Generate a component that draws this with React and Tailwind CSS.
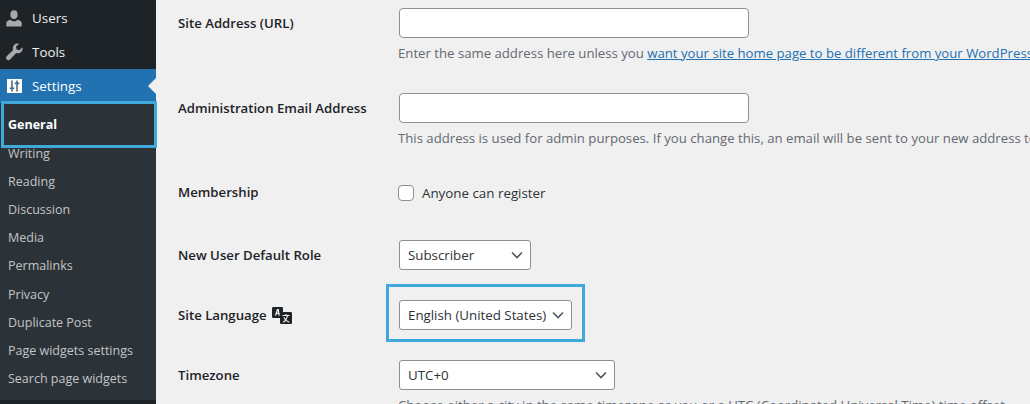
import React from 'react';

const FONT = "font-['Open_Sans','Noto_Sans',sans-serif]";

const SUB_ITEMS = [
  ['Writing', 'h-[28px]'],
  ['Reading', 'h-[28px]'],
  ['Discussion', 'h-[28px]'],
  ['Media', 'h-[28px]'],
  ['Permalinks', 'h-[29px]'],
  ['Privacy', 'h-[28px]'],
  ['Duplicate Post', 'h-[28px]'],
  ['Page widgets settings', 'h-[28px]'],
  ['Search page widgets', 'h-[28px]'],
];

function UsersIcon() {
  return (
    <svg width="16" height="17" viewBox="0 0 16 17" className="fill-[#a7aaad]">
      <ellipse cx="8" cy="4.600" rx="3.600" ry="4.400" />
      <path d="M0.300 16.500v-3.200c0-2 1.800-3 4.200-3.600 1 1.100 2.200 1.600 3.500 1.600s2.500-.5 3.500-1.600c2.400.6 4.200 1.600 4.200 3.600v3.200z" />
    </svg>
  );
}

function ToolsIcon() {
  return (
    <svg width="18" height="18" viewBox="0 0 18 18" className="fill-[#a7aaad]">
      <path d="M17.400 4.200c.5 1.700.1 3.500-1.200 4.800-1.300 1.300-3.200 1.700-4.900 1.100L5 16.500c-.9.900-2.400.9-3.300 0-.9-.9-.9-2.400 0-3.300l6.400-6.300C7.500 5.200 7.900 3.300 9.200 2 10.500.7 12.300.3 14 .8L11 3.800l.6 2.700 2.700.7z" />
    </svg>
  );
}

function SettingsIcon() {
  return (
    <svg width="15" height="14" viewBox="0 0 15 14">
      <rect width="15" height="14" fill="#ffffff" />
      <path d="M5 1.500v11M10 1.500v11" stroke="#2c3338" strokeWidth="1.200" />
      <path d="M2.800 8.400h4.400v1.700H2.800zM7.800 3.600h4.400v1.700H7.800z" fill="#2271b1" />
    </svg>
  );
}

function TranslationIcon() {
  return (
    <svg width="20" height="17" viewBox="0 0 20 17">
      <rect x="0" y="0" width="11" height="11" rx="1.200" fill="#1d2327" />
      <path d="M2.800 8.500 5 2h1.800l1 6.500H6.400l-.2-1.500H4.700l-.5 1.500zM5.100 5.700h1l-.2-1.900z" fill="#f0f0f1" />
      <rect x="8" y="5" width="12" height="12" rx="1.200" fill="#1d2327" />
      <path d="M10.500 8.500h7M14 7v1.500M11 15.200c2.400-1 3.900-3.200 4.400-6.500M12 10.400c.8 2.200 2.500 3.900 5.300 4.800" stroke="#f0f0f1" strokeWidth="1.100" fill="none" />
    </svg>
  );
}

function Chevron() {
  return (
    <svg width="12" height="8" viewBox="0 0 12 8" className="shrink-0">
      <path d="M1 1.500l5 5 5-5" fill="none" stroke="#50575e" strokeWidth="1.600" />
    </svg>
  );
}

function MenuItem({ icon, label, active }) {
  return (
    <div className={`relative flex h-[34px] items-center ${active ? 'bg-[#2271b1] text-white' : 'text-[#f0f0f1]'}`}>
      <span className="mr-[4px] flex w-[28px] shrink-0 justify-center">{icon}</span>
      <span className="text-[13.4px]">{label}</span>
      {active && (
        <span className="absolute right-0 top-[9px] h-0 w-0 border-y-[8px] border-r-[8px] border-y-transparent border-r-[#f0f0f1]" />
      )}
    </div>
  );
}

function Sidebar() {
  return (
    <aside className="flex h-[404px] w-[156px] shrink-0 flex-col bg-[#1d2327] pt-px">
      <MenuItem icon={<UsersIcon />} label="Users" />
      <MenuItem icon={<ToolsIcon />} label="Tools" />
      <MenuItem icon={<SettingsIcon />} label="Settings" active />
      <div className="h-[297px] bg-[#2c3338] pt-[8px]">
        <div className="relative mb-px flex h-[28px] items-center pl-[8px] text-[12.5px] font-bold text-white">
          General
          <span className="absolute -top-[10px] left-px h-[47px] w-[156px] border-[3px] border-[#3fa9dc]" />
        </div>
        <ul className="text-[12.5px] text-[#c3c4c7]">
          {SUB_ITEMS.map(([name, height]) => (
            <li key={name} className={`flex items-center pl-[8px] ${height}`}>
              {name}
            </li>
          ))}
        </ul>
      </div>
    </aside>
  );
}

function Row({ label, extra, height, children }) {
  return (
    <div className={`flex ${height}`}>
      <div className="flex w-[221px] shrink-0 items-start text-[13.2px] font-semibold leading-[30px] text-[#1d2327]">
        <span>{label}</span>
        {extra}
      </div>
      <div className="min-w-0 flex-1">{children}</div>
    </div>
  );
}

function TextBox() {
  return <div className="h-[30px] w-[350px] rounded-[4px] border border-[#8c8f94] bg-white" />;
}

function Select({ value, width }) {
  return (
    <div className={`flex h-[30px] items-center justify-between rounded-[3px] border border-[#8c8f94] bg-white pl-[8px] pr-[7px] text-[13.300px] text-[#2c3338] ${width}`}>
      <span className="whitespace-nowrap pt-px">{value}</span>
      <Chevron />
    </div>
  );
}

function Hint({ children }) {
  return <p className="mt-[5px] -ml-px whitespace-nowrap text-[13.180px] leading-[20px] text-[#646970]">{children}</p>;
}

export default function App() {
  return (
    <div className={`flex h-[404px] w-[1030px] overflow-hidden bg-[#f0f0f1] ${FONT}`}>
      <Sidebar />
      <main className="min-w-0 flex-1 overflow-hidden pl-[22px] pt-[8px]">
        <Row label="Site Address (URL)" height="h-[85px]">
          <TextBox />
          <Hint>
            Enter the same address here unless you{' '}
            <span className="text-[#2271b1] underline">want your site home page to be different from your WordPress installation address</span>
          </Hint>
        </Row>
        <Row label="Administration Email Address" height="h-[84px]">
          <TextBox />
          <Hint>This address is used for admin purposes. If you change this, an email will be sent to your new address to confirm it.</Hint>
        </Row>
        <Row label="Membership" height="h-[63px]">
          <label className="-ml-px mt-px flex h-[30px] items-center text-[13.350px] text-[#2c3338]">
            <span className="mr-[8px] h-[16px] w-[16px] rounded-[4px] border border-[#8c8f94] bg-white" />
            Anyone can register
          </label>
        </Row>
        <Row label="New User Default Role" height="h-[60px]">
          <Select value="Subscriber" width="w-[132px]" />
        </Row>
        <Row
          label="Site Language"
          height="h-[60px]"
          extra={<span className="ml-[5px] mt-[7px]"><TranslationIcon /></span>}
        >
          <div className="relative w-[173px]">
            <Select value="English (United States)" width="w-[173px]" />
            <div className="absolute -left-[13px] -top-[16px] h-[58px] w-[199px] border-[3px] border-[#3fa9dc]" />
          </div>
        </Row>
        <Row label="Timezone" height="h-[60px]">
          <Select value="UTC+0" width="w-[216px]" />
          <Hint>Choose either a city in the same timezone as you or a UTC (Coordinated Universal Time) time offset.</Hint>
        </Row>
      </main>
    </div>
  );
}
